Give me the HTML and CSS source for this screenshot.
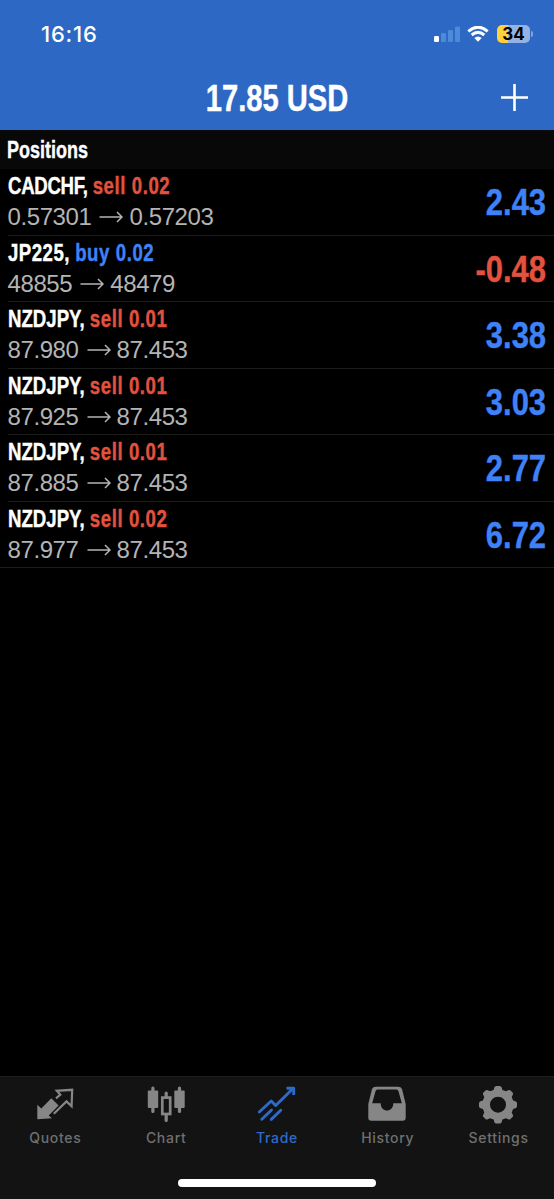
FILE: index.html
```html
<!DOCTYPE html>
<html lang="en">
<head>
    <meta charset="UTF-8">
    <meta name="viewport" content="width=device-width, initial-scale=1.0">
    <title>Trade</title>
    <link rel="stylesheet" href="styles.css">
</head>
<body>

<svg class="defs" width="0" height="0">
    <symbol id="arrow" viewBox="0 0 24 12">
        <path d="M0.5 6H23M18 1L23 6L18 11" fill="none" stroke="currentColor" stroke-width="1.5"/>
    </symbol>
</svg>

<div class="header">
    <div class="status">
        <div class="time">16:16</div>
        <div class="status-icons">
            <svg class="signal" width="26" height="16" viewBox="0 0 26 16" fill="#fff">
                <rect x="0" y="10" width="5" height="6" rx="1.3"/>
                <rect x="7" y="7" width="5" height="9" rx="1.3" fill="#4e8ad8"/>
                <rect x="14" y="4" width="5" height="12" rx="1.3" fill="#4e8ad8"/>
                <rect x="21" y="0.5" width="5" height="15.5" rx="1.3" fill="#4e8ad8"/>
            </svg>
            <svg class="wifi" width="22" height="16" viewBox="0 0 22 16">
                <path d="M1.3 5.3Q11 -2.9 20.7 5.3M4.7 9Q11 3.8 17.3 9" fill="none" stroke="#fff" stroke-width="3"/>
                <path d="M7.3 12Q11 8.9 14.7 12L11 15.8Z" fill="#fff"/>
            </svg>
            <div class="battery">34</div>
            <div class="battery-tip"></div>
        </div>
    </div>
    <div class="title-bar">
        <h1>17.85 USD</h1>
        <svg class="plus" width="27" height="27" viewBox="0 0 27 27">
            <path d="M0 13.5H27M13.5 0V27" stroke="#fff" stroke-width="2.6"/>
        </svg>
    </div>
</div>

<h2><span>Positions</span></h2>
<ul class="positions">
    <li>
        <div class="deal">
            <div class="symbol"><span class="tight">CADCHF,</span> <span class="sell">sell 0.02</span></div>
            <div class="price"><span>0.57301</span><svg class="arrow"><use href="#arrow"/></svg><span>0.57203</span></div>
        </div>
        <div class="profit">2.43</div>
    </li>
    <li>
        <div class="deal">
            <div class="symbol"><span class="wide">JP225,</span> <span class="buy">buy 0.02</span></div>
            <div class="price"><span>48855</span><svg class="arrow"><use href="#arrow"/></svg><span>48479</span></div>
        </div>
        <div class="profit loss">-0.48</div>
    </li>
    <li>
        <div class="deal">
            <div class="symbol">NZDJPY, <span class="sell">sell 0.01</span></div>
            <div class="price"><span>87.980</span><svg class="arrow"><use href="#arrow"/></svg><span>87.453</span></div>
        </div>
        <div class="profit">3.38</div>
    </li>
    <li>
        <div class="deal">
            <div class="symbol">NZDJPY, <span class="sell">sell 0.01</span></div>
            <div class="price"><span>87.925</span><svg class="arrow"><use href="#arrow"/></svg><span>87.453</span></div>
        </div>
        <div class="profit">3.03</div>
    </li>
    <li>
        <div class="deal">
            <div class="symbol">NZDJPY, <span class="sell">sell 0.01</span></div>
            <div class="price"><span>87.885</span><svg class="arrow"><use href="#arrow"/></svg><span>87.453</span></div>
        </div>
        <div class="profit">2.77</div>
    </li>
    <li>
        <div class="deal">
            <div class="symbol">NZDJPY, <span class="sell">sell 0.02</span></div>
            <div class="price"><span>87.977</span><svg class="arrow"><use href="#arrow"/></svg><span>87.453</span></div>
        </div>
        <div class="profit">6.72</div>
    </li>
</ul>

<div class="footer">
    <div class="tabs">
        <a class="tab">
            <svg width="40" height="40" viewBox="0 0 40 40">
                <path d="M2.3 19.8L6.3 23.4L16.3 13.3L23.6 20.4L13.7 30.4L17 33.3L2.3 34.2Z" fill="currentColor"/>
                <path d="M18.8 28.8L31.5 16.4L36.6 21.3L37.2 4.8L21.8 5.8L25.3 9.7L21 13.3" fill="none" stroke="currentColor" stroke-width="2.2"/>
            </svg>
            <span>Quotes</span>
        </a>
        <a class="tab">
            <svg width="40" height="40" viewBox="0 0 40 40">
                <g fill="none" stroke="currentColor" stroke-width="3.2" stroke-linecap="round">
                    <path d="M6.9 3V26.5M33.5 3V26.5M20.2 8V12M20.2 30V35.5"/>
                </g>
                <rect x="1.8" y="5.5" width="10.4" height="17.5" rx="1" fill="currentColor"/>
                <rect x="28.3" y="5.5" width="10.4" height="17.5" rx="1" fill="currentColor"/>
                <rect x="16.3" y="12.6" width="7.9" height="16.4" fill="none" stroke="currentColor" stroke-width="2.7"/>
            </svg>
            <span>Chart</span>
        </a>
        <a class="tab active">
            <svg width="40" height="40" viewBox="0 0 40 40">
                <g fill="none" stroke="currentColor" stroke-width="2.9" stroke-linecap="round" stroke-linejoin="round">
                    <path d="M3.3 27L15.2 16L19.7 20.5L37 3.5M5.8 34.2L15.5 25M15.3 34.4L24.8 25.2"/>
                    <path d="M30.5 3.2H37.7V10" stroke-linecap="butt"/>
                </g>
            </svg>
            <span>Trade</span>
        </a>
        <a class="tab">
            <svg width="40" height="40" viewBox="0 0 40 40">
                <path fill="currentColor" fill-rule="evenodd" d="M8.8 1.7H31.2Q34 1.7 35 4L38.2 17Q38.7 18.6 38.7 20V32.8Q38.7 35.7 35.8 35.7H4.2Q1.3 35.7 1.3 32.8V20Q1.3 18.6 1.8 17L5 4Q6 1.7 8.8 1.7ZM10.6 4.6Q9 4.6 8.5 6.2L5.2 18.3H13.7C13.7 28 26.3 28 26.3 18.3H34.8L31.5 6.2Q31 4.6 29.4 4.6Z"/>
            </svg>
            <span>History</span>
        </a>
        <a class="tab">
            <svg width="40" height="40" viewBox="0 0 40 40">
                <path fill="currentColor" fill-rule="evenodd" d="M18.2 1H21.8Q23.2 1 23.7 2.6L24.4 4.9L27.9 6.3L30.2 5.2Q31.5 4.5 32.5 5.5L34.5 7.5Q35.5 8.5 34.8 9.8L33.7 12.1L35.1 15.6L37.4 16.3Q39 16.8 39 18.2V21.3Q39 22.7 37.4 23.2L35.1 23.9L33.7 27.4L34.8 29.7Q35.5 31 34.5 32L32.5 34Q31.5 35 30.2 34.3L27.9 33.2L24.4 34.6L23.7 36.9Q23.2 38.5 21.8 38.5H18.2Q16.8 38.5 16.3 36.9L15.6 34.6L12.1 33.2L9.8 34.3Q8.5 35 7.5 34L5.5 32Q4.5 31 5.2 29.7L6.3 27.4L4.9 23.9L2.6 23.2Q1 22.7 1 21.3V18.2Q1 16.8 2.6 16.3L4.9 15.6L6.3 12.1L5.2 9.8Q4.5 8.5 5.5 7.5L7.5 5.5Q8.5 4.5 9.8 5.2L12.1 6.3L15.6 4.9L16.3 2.6Q16.8 1 18.2 1ZM20 11.7A8 8 0 1 0 20 27.7A8 8 0 1 0 20 11.7Z"/>
            </svg>
            <span>Settings</span>
        </a>
    </div>
    <div class="home-bar"></div>
</div>

</body>
</html>
```
FILE: styles.css
```css
* {
    box-sizing: border-box;
}
body {
    margin: 0;
    height: 1199px;
    display: flex;
    flex-direction: column;
    background-color: #000;
    color: #fff;
    font-family: "Liberation Sans", Arial, sans-serif;
    overflow: hidden;
}
.defs {
    display: none;
}
.header {
    height: 130px;
    background-color: #2e68c5;
}
.status {
    display: flex;
    justify-content: space-between;
    height: 68px;
    padding: 0 21px 0 41px;
    align-items: center;
}
.time {
    font-family: Inter, sans-serif;
    font-size: 22px;
    font-weight: 500;
    letter-spacing: 0.8px;
}
.status-icons {
    display: flex;
    align-items: center;
}
.wifi {
    margin: 0 8px 0 7px;
}
.battery {
    width: 33px;
    height: 18px;
    border-radius: 5px;
    background: linear-gradient(90deg, #fdd23c 11px, #94b3e3 11px);
    color: #000;
    font-family: Inter, sans-serif;
    font-size: 17px;
    font-weight: 700;
    line-height: 18px;
    text-align: center;
}
.battery-tip {
    width: 2px;
    height: 6px;
    margin-left: 1px;
    border-radius: 0 2px 2px 0;
    background-color: #7ea3dd;
}
.title-bar {
    display: grid;
    grid-template-columns: 1fr auto 1fr;
    align-items: center;
    height: 60px;
    padding-right: 26px;
    padding-left: 26px;
}
/* thicken the strokes that the condensing makes thin */
h1, h2, .symbol, .profit {
    font-weight: 700;
    -webkit-text-stroke: 0.4px currentColor;
}
h1 {
    grid-column: 2;
    margin: 0;
    padding-top: 2px;
    font-size: 36px;
    transform: scaleX(0.81);
}
.plus {
    justify-self: end;
    margin-top: -1px;
}
h2 {
    height: 39px;
    margin: 0;
    padding-left: 7px;
    background-color: #080808;
    font-size: 23.5px;
    line-height: 40px;
}
h2 span {
    display: block;
    transform: scaleX(0.765);
    transform-origin: left;
}
.positions {
    list-style-type: none;
    margin: 0;
    padding: 0;
    border-bottom: 1px solid #1c1c1c;
}
.positions li {
    display: flex;
    justify-content: space-between;
    align-items: center;
    height: 66.5px;
    margin-left: 8px;
    padding-right: 8px;
    border-bottom: 1px solid #1c1c1c;
}
.positions li:last-child {
    height: 65.5px;
    border-bottom: none;
}
.deal {
    margin-left: -0.5px;
}
/* condensed bold */
.symbol {
    font-size: 23px;
    line-height: 31px;
    white-space: nowrap;
    transform: scaleX(0.81);
    transform-origin: left;
}
.tight {
    letter-spacing: -0.4px;
}
.wide {
    letter-spacing: 0.6px;
}
.sell, .buy {
    letter-spacing: 0.7px;
}
.sell, .loss {
    color: #e3513f;
}
.buy {
    color: #3f82f7;
}
.price {
    display: flex;
    align-items: center;
    color: #b4b4b4;
    font-size: 24px;
    letter-spacing: -0.4px;
    line-height: 30px;
}
.arrow {
    width: 24px;
    height: 12px;
    margin: 0 6px 0 8px;
}
.profit {
    padding-top: 3px;
    color: #3f82f7;
    font-size: 36px;
    transform: scaleX(0.86);
    transform-origin: right;
}
.profit.loss {
    color: #e3513f;
}
.footer {
    height: 123px;
    margin-top: auto;
    border-top: 1px solid #1e1e1e;
    background-color: #131313;
}
.tabs {
    display: grid;
    grid-template-columns: repeat(5, 1fr);
    height: 106px;
    padding-top: 8px;
}
.tab {
    display: flex;
    flex-direction: column;
    align-items: center;
    color: #868686;
    font-family: Inter, sans-serif;
    font-size: 14px;
    font-weight: 500;
    letter-spacing: 0.7px;
}
.tab svg {
    margin-left: -1px;
}
.tab span {
    margin-top: 4px;
    color: #707070;
}
.tab.active, .tab.active span {
    color: #2e6bc9;
}
.home-bar {
    width: 198px;
    height: 8px;
    margin: -4px auto 0;
    border-radius: 4px;
    background-color: #fff;
}
```
